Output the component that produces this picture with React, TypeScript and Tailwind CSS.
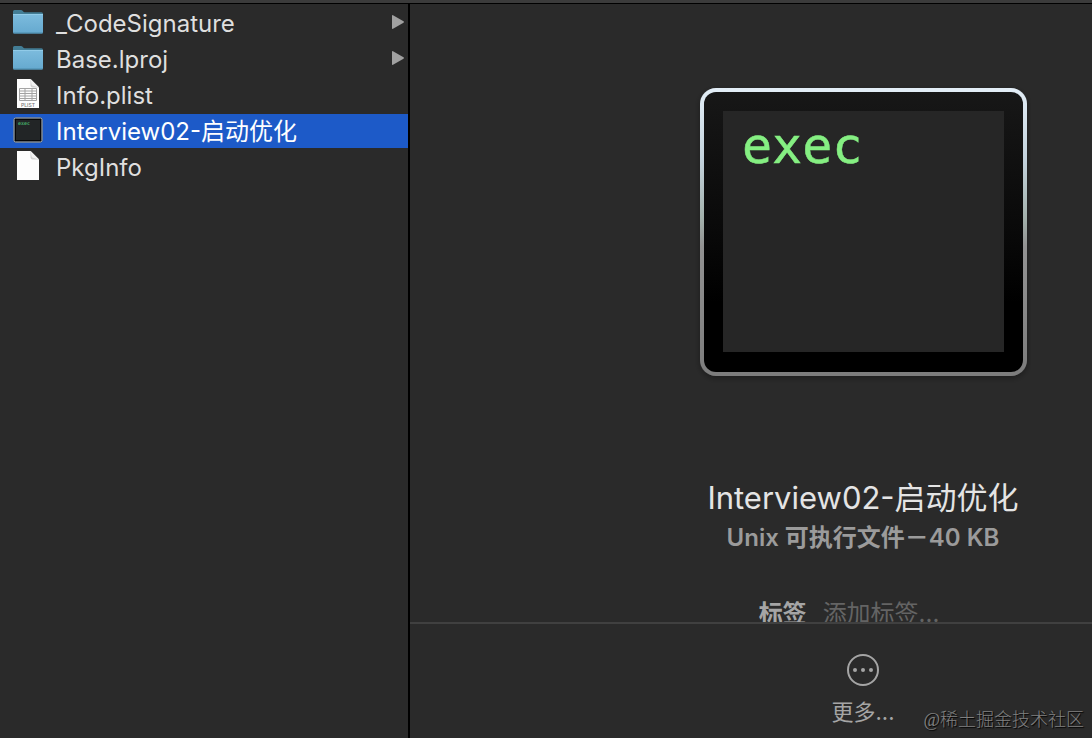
import { useState } from "react";

type Kind = "folder" | "plist" | "exec" | "blank";

const files: { name: string; kind: Kind }[] = [
  { name: "_CodeSignature", kind: "folder" },
  { name: "Base.lproj", kind: "folder" },
  { name: "Info.plist", kind: "plist" },
  { name: "Interview02-启动优化", kind: "exec" },
  { name: "PkgInfo", kind: "blank" },
];

function FolderIcon() {
  return (
    <svg viewBox="0 1 32 32" className="size-8" aria-hidden="true">
      <defs>
        <linearGradient id="folder" x1="0" y1="0" x2="0" y2="1">
          <stop offset="0" stopColor="#7cbbdd" />
          <stop offset="1" stopColor="#65a9cf" />
        </linearGradient>
      </defs>
      <path d="M1 7V5.500Q1 4 2.500 4H9q1 0 1.600.8l.6.8q.5.6 1.400.6h16.900q1.500 0 1.500 1.500V10H1z" fill="#437d95" />
      <path d="M1 8.500h30V26q0 1.500-1.500 1.500h-27Q1 27.500 1 26z" fill="url(#folder)" />
      <path d="M1 8.500h30" stroke="#91cbe8" strokeWidth="1" />
      <path d="M1.500 27h29" stroke="#4b8aab" strokeWidth="1" />
    </svg>
  );
}

function PageIcon({ plist }: { plist?: boolean }) {
  return (
    <svg viewBox="0 2 32 32" className="size-8" aria-hidden="true">
      <path d="M5 2h13.500L27 10.500V31H5z" fill="#fdfdfd" />
      <path d="M18.500 2L27 10.500h-6.500q-2 0-2-2z" fill="#d2d2d2" />
      <path d="M18.500 2L27 10.500l-6-1.700q-1.200-.300-1.500-1.500z" fill="#f2f2f2" />
      {plist && (
        <>
          <path d="M7.500 11.500h17v12h-17zM7.500 14h17M7.500 16.500h17M7.500 19h17M7.500 21.500h17M13 11.500v12M20 11.500v12" fill="none" stroke="#a3a3a3" strokeWidth="1" />
          <text x="16" y="30" textAnchor="middle" fontSize="5" fontFamily="Inter, sans-serif" fontWeight="500" fill="#777">PLIST</text>
        </>
      )}
    </svg>
  );
}

function SmallExecIcon() {
  return (
    <svg viewBox="0 0 32 32" className="size-8" aria-hidden="true">
      <rect x="2.750" y="3.750" width="26.500" height="22.500" rx="1" fill="#222526" stroke="#050505" strokeWidth="2.500" />
      <rect x="2" y="3" width="28" height="24" rx="1.500" fill="none" stroke="#c0cdd8" strokeWidth="1" />
      <text x="6" y="10" fontSize="5" fontFamily="DejaVu Sans Mono, monospace" fontWeight="700" fill="#43a565">exec</text>
    </svg>
  );
}

function FileIcon({ kind }: { kind: Kind }) {
  if (kind === "folder") return <FolderIcon />;
  if (kind === "exec") return <SmallExecIcon />;
  return <PageIcon plist={kind === "plist"} />;
}

function ExecArtwork() {
  return (
    <svg viewBox="0 0 336 304" className="h-[304px] w-[336px] shrink-0" role="img" aria-label="exec">
      <defs>
        <linearGradient id="rim" x1="0" y1="0" x2="0" y2="1">
          <stop offset="0" stopColor="#e3eef7" />
          <stop offset="0.250" stopColor="#c3d2dc" />
          <stop offset="0.450" stopColor="#a3b1ac" />
          <stop offset="0.550" stopColor="#929292" />
          <stop offset="1" stopColor="#7c7c7c" />
        </linearGradient>
        <linearGradient id="bezel" x1="0" y1="0" x2="0" y2="1">
          <stop offset="0" stopColor="#171717" />
          <stop offset="0.500" stopColor="#090909" />
          <stop offset="0.750" stopColor="#000" />
        </linearGradient>
        <filter id="shade" x="-10%" y="-10%" width="120%" height="120%">
          <feDropShadow dx="0" dy="2" stdDeviation="3" floodColor="#000" floodOpacity="0.350" />
        </filter>
      </defs>
      <rect x="5" y="8" width="327" height="288" rx="16" fill="url(#rim)" filter="url(#shade)" />
      <rect x="9" y="12" width="319" height="280" rx="12" fill="url(#bezel)" />
      <rect x="28" y="31" width="281" height="241" fill="#262626" />
      <text x="47" y="83" fontSize="50" fontFamily="DejaVu Sans Mono, monospace" fill="#85ef82" stroke="#85ef82" strokeWidth="0.500">exec</text>
    </svg>
  );
}

export default function App() {
  const [selected, setSelected] = useState(3);
  return (
    <div className="relative flex h-screen flex-col overflow-hidden bg-[#2a2a2a] font-['Inter','Noto_Sans_CJK_SC',sans-serif] text-[#dfdfdf]">
      <div className="h-1 shrink-0 border-b border-black bg-[#3b3b3b]" />
      <div className="flex min-h-0 flex-1">
        <nav aria-label="Files" className="w-[410px] shrink-0 border-r-2 border-black pt-0.5">
          <ul className="flex flex-col gap-0.5">
            {files.map((file, i) => (
              <li key={file.name}>
                <button
                  type="button"
                  aria-pressed={i === selected}
                  onClick={() => setSelected(i)}
                  className={`flex h-[34px] w-full items-center gap-3 pr-1 pl-3 text-left text-2xl whitespace-nowrap ${
                    i === selected ? "bg-[#1d5ac8] text-white" : ""
                  }`}
                >
                  <FileIcon kind={file.kind} />
                  <span className="flex-1 pt-0.5">{file.name}</span>
                  {file.kind === "folder" && (
                    <svg viewBox="0 0 12 14" className="mb-0.5 h-3.5 w-3" aria-hidden="true">
                      <path d="M0 .8Q0-.3 1 .2L11.500 6.300q.900.700 0 1.400L1 13.800q-1 .5-1-.6z" fill="#a1a1a1" />
                    </svg>
                  )}
                </button>
              </li>
            ))}
          </ul>
        </nav>
        <main className="flex min-w-0 flex-1 flex-col">
          <section className="flex min-h-0 flex-1 flex-col items-center overflow-hidden pt-19 pl-56 whitespace-nowrap">
            <ExecArtwork />
            <h1 className="mt-23 text-[31px] leading-11 font-normal text-[#e4e4e4]">Interview02-启动优化</h1>
            <p className="text-2xl leading-9 font-semibold text-[#9b9b9b]">Unix 可执行文件－40 KB</p>
            <div className="mt-10 flex shrink-0 gap-4 pr-7 text-2xl leading-9">
              <span className="font-bold text-[#a5a5a5]">标签</span>
              <span className="text-[#646464]">添加标签...</span>
            </div>
          </section>
          <footer className="flex h-[116px] shrink-0 flex-col items-center border-t-2 border-[#404040] pt-[30px] pl-56">
            <button type="button" className="flex flex-col items-center gap-2.5 text-[22px] leading-8 text-[#a5a5a5]">
              <svg viewBox="0 0 32 32" className="size-8" aria-hidden="true">
                <circle cx="16" cy="16" r="15" fill="none" stroke="currentColor" strokeWidth="2" />
                <circle cx="8" cy="16" r="2" fill="currentColor" />
                <circle cx="16" cy="16" r="2" fill="currentColor" />
                <circle cx="24" cy="16" r="2" fill="currentColor" />
              </svg>
              更多...
            </button>
          </footer>
        </main>
      </div>
      <div className="absolute right-2 bottom-1 font-['Liberation_Serif','Noto_Sans_CJK_SC',serif] text-lg leading-7 font-light text-[#808080] [text-shadow:1px_1px_1px_#000]">
        @稀土掘金技术社区
      </div>
    </div>
  );
}
